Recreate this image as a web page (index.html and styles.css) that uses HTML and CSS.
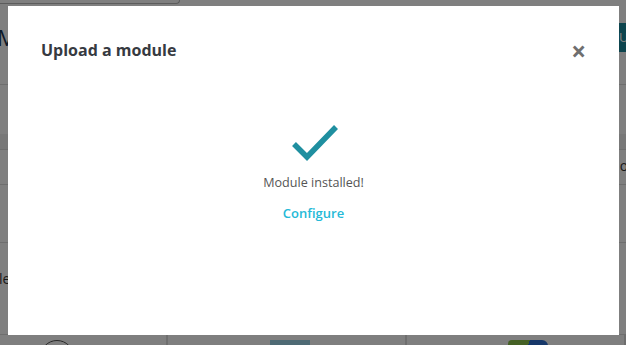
FILE: index.html
```html
<!DOCTYPE html>
<html lang="en">
<head>
    <meta charset="UTF-8">
    <meta name="viewport" content="width=device-width, initial-scale=1.0">
    <title>Module manager</title>
    <link rel="stylesheet" href="styles.css">
</head>
<body>
    <div class="page">
        <div class="tabs"></div>
        <div class="toolbar">
            <h1 class="page-title">Module manager</h1>
            <a class="btn-upload">Upload a module</a>
        </div>
        <div class="band"></div>
        <div class="row row-first"><span class="hint">or</span></div>
        <div class="row row-second"></div>
        <div class="row row-third"><span class="name">le</span></div>
        <div class="cards">
            <div class="card card-one"><span class="logo-round"></span></div>
            <div class="card card-two"><span class="logo-box"></span></div>
            <div class="card card-three"><span class="logo-flag"></span></div>
        </div>
    </div>
    <div class="backdrop"></div>

    <div class="modal">
        <div class="modal-header">
            <h2 class="modal-title">Upload a module</h2>
            <span class="close">&times;</span>
        </div>
        <div class="modal-body">
            <svg class="check" width="48" height="38" viewBox="0 0 48 38">
                <polyline points="3,20 16,33 45,3" fill="none" stroke="#1f8fa0" stroke-width="5.5" stroke-linejoin="miter"/>
            </svg>
            <p class="message">Module installed!</p>
            <a class="configure">Configure</a>
        </div>
    </div>
</body>
</html>
```

FILE: styles.css
```css
*{
    margin: 0;
    padding: 0;
    box-sizing: border-box;
}
body{
    width: 626px;
    height: 345px;
    overflow: hidden;
    font-family: "Open Sans", "Noto Sans", sans-serif;
    background-color: #fff;
}

/* page behind the dialog */
.page{
    height: 345px;
    overflow: hidden;
}
.tabs{
    width: 180px;
    height: 4px;
    border-bottom: 1px solid #b8b8b8;
    border-right: 1px solid #b8b8b8;
    border-bottom-right-radius: 6px;
}
.toolbar{
    display: flex;
    justify-content: space-between;
    align-items: center;
    height: 81px;
    border-bottom: 1px solid #dcdcdc;
    padding-bottom: 14px;
}
.page-title{
    font-size: 22px;
    font-weight: 400;
    color: #1a3550;
    margin-left: -3px;
}
.btn-upload{
    display: block;
    width: 120px;
    height: 29px;
    margin-right: -110px;
    padding-left: 3px;
    background-color: #1b8a9c;
    color: #fff;
    font-size: 13px;
    line-height: 29px;
}
.band{
    height: 65px;
    border-bottom: 1px solid #dcdcdc;
    background: linear-gradient(#fff 49px, #f0f0f0 49px);
}
.row{
    border-bottom: 1px solid #dcdcdc;
    font-size: 14px;
    color: #333;
}
.row-first{
    height: 35px;
    display: flex;
    justify-content: flex-end;
    padding-top: 6px;
}
.hint{
    margin-right: -8px;
}
.row-second{
    height: 58px;
}
.row-third{
    height: 92px;
    padding-top: 26px;
}
.name{
    margin-left: -1px;
}
.cards{
    display: grid;
    grid-template-columns: 168px 239px 219px;
}
.card{
    height: 40px;
    border-right: 2px solid #ddd;
    display: flex;
    padding-top: 5px;
}
.card-one{
    padding-left: 40px;
}
.card-two{
    padding-left: 102px;
}
.card-three{
    padding-left: 101px;
}
.logo-round{
    width: 34px;
    height: 34px;
    border: 1px solid #555;
    border-radius: 50%;
}
.logo-box{
    width: 40px;
    height: 20px;
    background-color: #9cd4e8;
}
.logo-flag{
    width: 40px;
    height: 20px;
    border-radius: 4px 6px 0 0;
    background: linear-gradient(115deg, #8bc34a 45%, #2d6fd3 45%);
}

.backdrop{
    position: fixed;
    inset: 0;
    background-color: rgba(0, 0, 0, 0.5);
}

/* dialog */
.modal{
    position: absolute;
    top: 6px;
    left: 8px;
    width: 611px;
    height: 329px;
    background-color: #fff;
    display: flex;
    flex-direction: column;
}
.modal-header{
    display: flex;
    justify-content: space-between;
    align-items: center;
    padding: 30px 33px 0 33px;
}
.modal-title{
    font-size: 16px;
    line-height: 24px;
    font-weight: 700;
    color: #363a41;
}
.close{
    font-size: 26px;
    line-height: 24px;
    font-weight: 700;
    color: #6f6f6f;
    margin-top: 3px;
}
.modal-body{
    display: flex;
    flex-direction: column;
    align-items: center;
    padding-top: 61px;
}
.check{
    display: block;
    margin-left: 2px;
}
.message{
    margin-top: 12px;
    font-size: 12.6px;
    line-height: 18px;
    color: #555;
}
.configure{
    margin-top: 12px;
    font-size: 13px;
    line-height: 18px;
    font-weight: 600;
    color: #25b9d7;
}
```
